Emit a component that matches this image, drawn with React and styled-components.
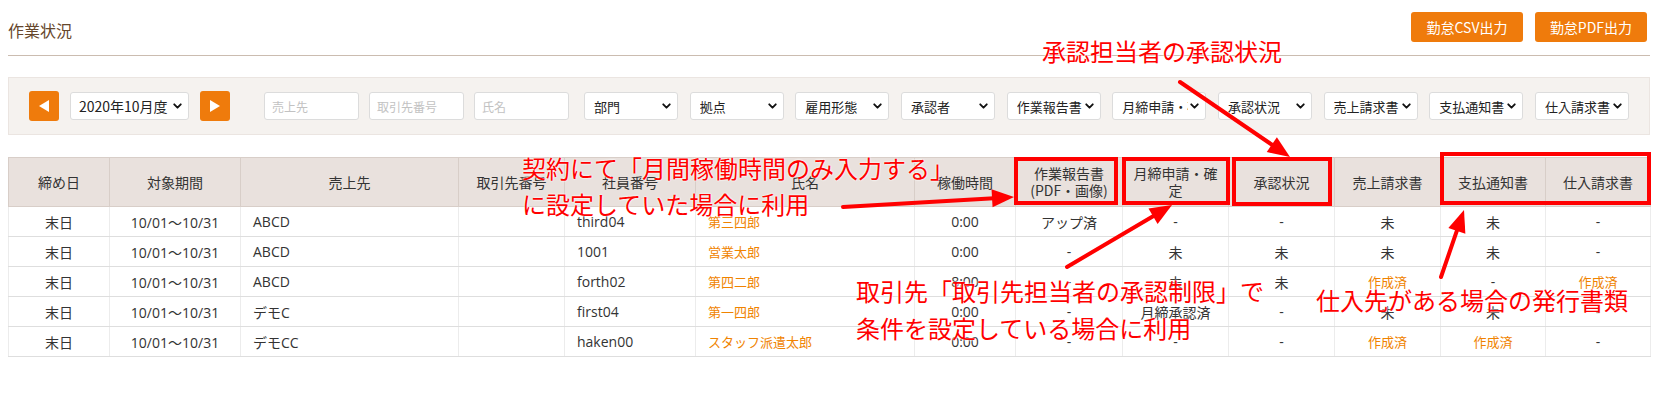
import React from "react";
import styled, { createGlobalStyle } from "styled-components";
import { ChevronDown } from "lucide-react";

const ORANGE = "#ef7b0c";
const RED = "#ff0000";

const GlobalStyle = createGlobalStyle`
  body {
    margin: 0;
    background: #fff;
    color: #333;
    font-family: "Open Sans", "Noto Sans CJK JP", sans-serif;
  }
`;

const Page = styled.div`
  position: relative;
  width: 1664px;
  height: 412px;
  box-sizing: border-box;
  padding: 0 14px 0 8px;
  overflow: hidden;
`;

const TitleBar = styled.header`
  display: flex;
  justify-content: space-between;
  align-items: flex-start;
  height: 56px;
  box-sizing: border-box;
  padding: 12px 3px 0 0;
  border-bottom: 1px solid #cbbcb0;
`;

const Title = styled.h1`
  margin: 7px 0 0;
  font-family: "Noto Sans CJK JP", sans-serif;
  font-size: 16px;
  line-height: 22px;
  font-weight: normal;
  color: #66472c;
`;

const ExportGroup = styled.div`
  display: flex;
  gap: 12px;
`;

const ExportButton = styled.button`
  width: 112px;
  height: 30px;
  border: none;
  border-radius: 3px;
  background: ${ORANGE};
  color: #fff;
  font-family: "Noto Sans CJK JP", sans-serif;
  font-size: 14px;
  padding: 0;
`;

const FilterPanel = styled.section`
  display: flex;
  align-items: center;
  margin-top: 21px;
  height: 58px;
  box-sizing: border-box;
  padding: 0 20px;
  background: #f5f2ef;
  border: 1px solid #ebe5e1;
`;

const MonthNav = styled.div`
  display: flex;
  align-items: center;
  gap: 11px;
`;

const NavButton = styled.button`
  width: 30px;
  height: 30px;
  padding: 0;
  border: none;
  border-radius: 3px;
  background: ${ORANGE};
  display: flex;
  align-items: center;
  justify-content: center;
`;

const SearchInputs = styled.div`
  display: flex;
  gap: 10px;
  margin-left: 34px;
`;

const TextInput = styled.input`
  width: 95px;
  height: 28px;
  box-sizing: border-box;
  border: 1px solid #dcdcdc;
  border-radius: 3px;
  background: #fff;
  padding: 0 7px;
  font-family: "Noto Sans CJK JP", sans-serif;
  font-size: 12px;
  &::placeholder {
    color: #c2c2c2;
  }
`;

const SelectGroup = styled.div`
  flex: 1;
  display: flex;
  justify-content: space-between;
  margin-left: 15px;
`;

const SelectWrap = styled.div`
  position: relative;
  width: ${(p) => p.$width}px;
  height: 28px;
`;

const Select = styled.select`
  appearance: none;
  width: 100%;
  height: 100%;
  box-sizing: border-box;
  border: 1px solid #dcdcdc;
  border-radius: 3px;
  background: #fff;
  padding: 0 17px 0 ${(p) => p.$pad}px;
  font-family: "Noto Sans CJK JP", sans-serif;
  font-size: ${(p) => p.$size}px;
  color: #222;
`;

const Chevron = styled(ChevronDown)`
  position: absolute;
  right: 5px;
  top: 50%;
  transform: translateY(-50%);
  pointer-events: none;
  color: #111;
`;

const Table = styled.table`
  margin-top: 22px;
  width: 1642px;
  table-layout: fixed;
  border-collapse: collapse;
  font-size: 14px;
  border-bottom: 1px solid #d8d0ca;
`;

const HeadCell = styled.th`
  height: 48px;
  padding: 0 8px;
  background: #e9e1dd;
  border: 1px solid #d8cec8;
  font-family: "Noto Sans CJK JP", sans-serif;
  font-weight: normal;
  font-size: 14px;
  line-height: 17px;
  color: #333;
`;

const Cell = styled.td`
  height: 29px;
  padding: 0 12px;
  border-left: 1px solid #ececec;
  border-right: 1px solid #ececec;
  border-bottom: 1px solid #dedede;
  text-align: ${(p) => p.$align};
  color: ${(p) => (p.$accent ? "#f08300" : "#333")};
  font-size: ${(p) => (p.$accent ? "13px" : "14px")};
  white-space: nowrap;
  overflow: hidden;
`;

const Overlay = styled.svg`
  position: absolute;
  left: 0;
  top: 0;
  pointer-events: none;
`;

const Note = styled.div`
  position: absolute;
  left: ${(p) => p.$x}px;
  top: ${(p) => p.$y}px;
  font-family: "Noto Sans CJK JP", sans-serif;
  font-size: 24px;
  line-height: ${(p) => p.$lh || 24}px;
  color: ${RED};
  white-space: nowrap;
  text-shadow: 0 0 2px #fff, 0 0 2px #fff;
  pointer-events: none;
`;

const columns = [
  { label: "締め日", w: 101, align: "center" },
  { label: "対象期間", w: 131, align: "center" },
  { label: "売上先", w: 218, align: "left" },
  { label: "取引先番号", w: 106, align: "left" },
  { label: "社員番号", w: 131, align: "left" },
  { label: "氏名", w: 219, align: "left", accent: true },
  { label: "稼働時間", w: 101, align: "center" },
  { label: ["作業報告書", "(PDF・画像)"], w: 107, align: "center" },
  { label: "月締申請・確定", w: 106, align: "center" },
  { label: "承認状況", w: 106, align: "center" },
  { label: "売上請求書", w: 106, align: "center" },
  { label: "支払通知書", w: 105, align: "center" },
  { label: "仕入請求書", w: 105, align: "center" },
];

const rows = [
  ["末日", "10/01～10/31", "ABCD", "", "third04", "第三四郎", "0:00", "アップ済", "-", "-", "未", "未", "-"],
  ["末日", "10/01～10/31", "ABCD", "", "1001", "営業太郎", "0:00", "-", "未", "未", "未", "未", "-"],
  ["末日", "10/01～10/31", "ABCD", "", "forth02", "第四二郎", "8:00", "-", "未", "未", "作成済", "-", "作成済"],
  ["末日", "10/01～10/31", "デモC", "", "first04", "第一四郎", "0:00", "-", "月締承認済", "-", "未", "未", "-"],
  ["末日", "10/01～10/31", "デモCC", "", "haken00", "スタッフ派遣太郎", "0:00", "-", "-", "-", "作成済", "作成済", "-"],
];

const filterSelects = [
  "部門", "拠点", "雇用形態", "承認者", "作業報告書",
  "月締申請・確定", "承認状況", "売上請求書", "支払通知書", "仕入請求書",
];

function Dropdown({ label, width = 94, pad = 9, size = 13 }) {
  return (
    <SelectWrap $width={width}>
      <Select $pad={pad} $size={size} defaultValue={label}>
        <option>{label}</option>
      </Select>
      <Chevron size={13} strokeWidth={3.5} />
    </SelectWrap>
  );
}

function Triangle({ dir }) {
  const pts = dir === "left" ? "10,0 10,12 0,6" : "0,0 0,12 10,6";
  return (
    <svg width="10" height="12" viewBox="0 0 10 12">
      <polygon points={pts} fill="#fff" />
    </svg>
  );
}

function Arrow({ from, to }) {
  const [x1, y1] = from;
  const [x2, y2] = to;
  const len = Math.hypot(x2 - x1, y2 - y1);
  const ux = (x2 - x1) / len;
  const uy = (y2 - y1) / len;
  const head = 22;
  const half = 9;
  const bx = x2 - ux * head;
  const by = y2 - uy * head;
  const pts = [
    `${x2},${y2}`,
    `${bx - uy * half},${by + ux * half}`,
    `${bx + uy * half},${by - ux * half}`,
  ].join(" ");
  return (
    <g>
      <line x1={x1} y1={y1} x2={bx + ux * 2} y2={by + uy * 2} stroke={RED} strokeWidth="4" strokeLinecap="round" />
      <polygon points={pts} fill={RED} />
    </g>
  );
}

function Frame({ x1, y1, x2, y2 }) {
  return (
    <rect x={x1 + 2} y={y1 + 2} width={x2 - x1 - 4} height={y2 - y1 - 4} fill="none" stroke={RED} strokeWidth="4" />
  );
}

export default function App() {
  return (
    <>
      <GlobalStyle />
      <Page>
        <TitleBar>
          <Title>作業状況</Title>
          <ExportGroup>
            <ExportButton>勤怠CSV出力</ExportButton>
            <ExportButton>勤怠PDF出力</ExportButton>
          </ExportGroup>
        </TitleBar>

        <FilterPanel>
          <MonthNav>
            <NavButton aria-label="前月">
              <Triangle dir="left" />
            </NavButton>
            <Dropdown label="2020年10月度" width={119} pad={8} size={14} />
            <NavButton aria-label="翌月">
              <Triangle dir="right" />
            </NavButton>
          </MonthNav>
          <SearchInputs>
            <TextInput placeholder="売上先" />
            <TextInput placeholder="取引先番号" />
            <TextInput placeholder="氏名" />
          </SearchInputs>
          <SelectGroup>
            {filterSelects.map((s) => (
              <Dropdown key={s} label={s} />
            ))}
          </SelectGroup>
        </FilterPanel>

        <Table>
          <colgroup>
            {columns.map((c, i) => (
              <col key={i} style={{ width: c.w }} />
            ))}
          </colgroup>
          <thead>
            <tr>
              {columns.map((c, i) => (
                <HeadCell key={i}>
                  {Array.isArray(c.label) ? (
                    <>
                      {c.label[0]}
                      <br />
                      {c.label[1]}
                    </>
                  ) : (
                    c.label
                  )}
                </HeadCell>
              ))}
            </tr>
          </thead>
          <tbody>
            {rows.map((r, ri) => (
              <tr key={ri}>
                {r.map((v, ci) => (
                  <Cell
                    key={ci}
                    $align={columns[ci].align}
                    $accent={columns[ci].accent || v === "作成済"}
                  >
                    {v}
                  </Cell>
                ))}
              </tr>
            ))}
          </tbody>
        </Table>

        <Overlay width="1664" height="412" viewBox="0 0 1664 412">
          <Frame x1={1014} y1={157} x2={1118} y2={205} />
          <Frame x1={1122} y1={157} x2={1230} y2={205} />
          <Frame x1={1232} y1={157} x2={1332} y2={206} />
          <Frame x1={1440} y1={152} x2={1651} y2={205} />
          <Arrow from={[1180, 82]} to={[1290, 157]} />
          <Arrow from={[843, 207]} to={[1014, 197]} />
          <Arrow from={[1067, 267]} to={[1172, 205]} />
          <Arrow from={[1441, 277]} to={[1464, 210]} />
        </Overlay>

        <Note $x={1042} $y={39}>承認担当者の承認状況</Note>
        <Note $x={522} $y={150} $lh={36}>
          契約にて「月間稼働時間のみ入力する」
          <br />
          に設定していた場合に利用
        </Note>
        <Note $x={856} $y={272} $lh={37}>
          取引先「取引先担当者の承認制限」で
          <br />
          条件を設定している場合に利用
        </Note>
        <Note $x={1316} $y={288}>仕入先がある場合の発行書類</Note>
      </Page>
    </>
  );
}
